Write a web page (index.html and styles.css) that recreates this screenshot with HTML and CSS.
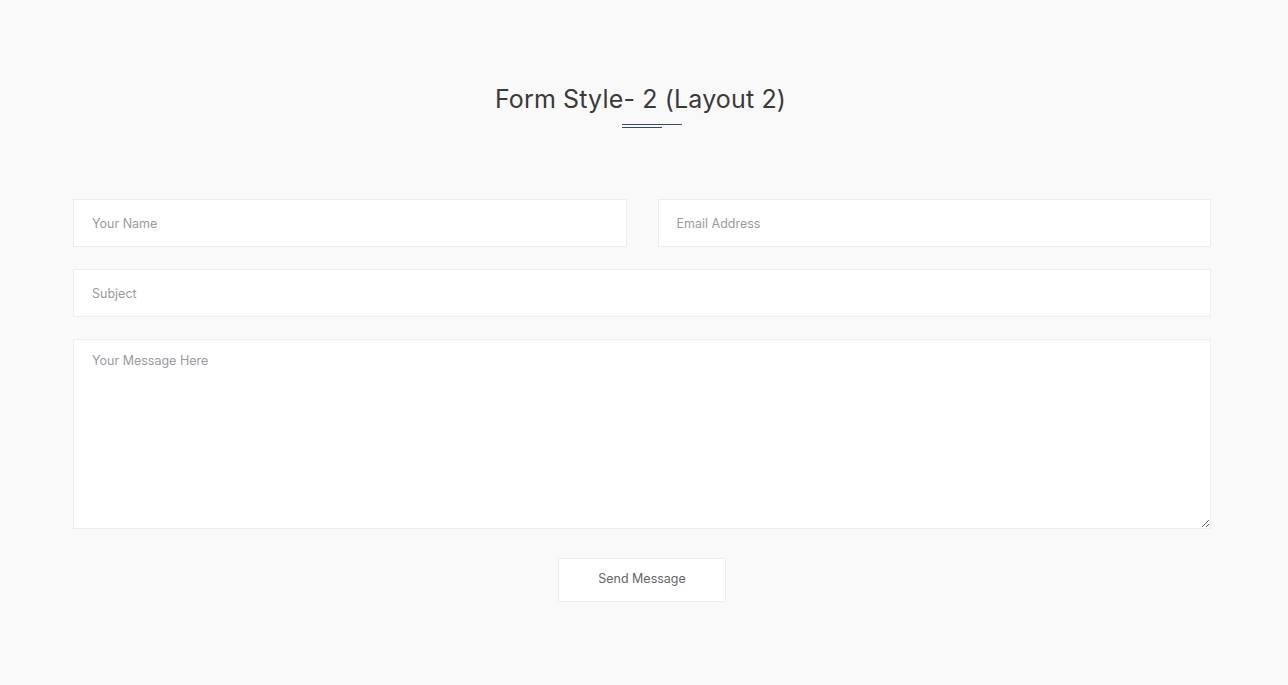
FILE: index.html
```html
<!DOCTYPE html>
<html>
<head>
<meta charset="utf-8">
<link rel="stylesheet" href="styles.css">
</head>
<body>
<section class="page">
  <div class="heading">
    <h2 class="title">Form Style- 2 (Layout 2)</h2>
    <div class="rule"><span class="rule-long"></span><span class="rule-short"></span></div>
  </div>
  <form class="form">
    <div class="row two">
      <input class="field" type="text" placeholder="Your Name">
      <input class="field" type="email" placeholder="Email Address">
    </div>
    <div class="row">
      <input class="field" type="text" placeholder="Subject">
    </div>
    <div class="row">
      <textarea class="field area" placeholder="Your Message Here"></textarea>
    </div>
    <div class="actions">
      <button class="btn" type="button">Send Message</button>
    </div>
  </form>
</section>
</body>
</html>
```
FILE: styles.css
```css
html, body {
  margin: 0;
  padding: 0;
  background: #f9f9f9;
  font-family: Inter, "Noto Sans", sans-serif;
}
.page {
  padding-top: 84px;
}
.heading {
  display: flex;
  flex-direction: column;
  align-items: center;
}
.title {
  margin: 0;
  padding-right: 7px;
  font-weight: 400;
  font-size: 25px;
  line-height: 30px;
  color: #3a3a3a;
  letter-spacing: 0.15px;
}
.rule {
  margin-top: 10px;
  margin-left: 16px;
  width: 60px;
  display: flex;
  flex-direction: column;
  gap: 2px;
}
.rule-long {
  display: block;
  width: 60px;
  height: 1px;
  background: #3b4a66;
}
.rule-short {
  display: block;
  width: 40px;
  height: 1px;
  background: #3b4a66;
}
.form {
  width: 1138px;
  margin: 71px 0 0 73px;
  display: flex;
  flex-direction: column;
  gap: 22px;
}
.row {
  display: flex;
}
.row.two {
  gap: 31px;
}
.field {
  flex: 1;
  box-sizing: border-box;
  height: 48px;
  border: 1px solid #ededed;
  background: #fff;
  padding: 0 18px;
  font-family: Inter, "Noto Sans", sans-serif;
  font-size: 12.5px;
  color: #555;
  outline: none;
}
.field::placeholder {
  color: #9a9a9e;
}
.area {
  height: 190px;
  padding-top: 13px;
  resize: vertical;
}
.actions {
  display: flex;
  justify-content: center;
  margin-top: 7px;
}
.btn {
  width: 168px;
  height: 44px;
  padding: 0 0 3px;
  background: #fff;
  border: 1px solid #ededed;
  font-family: Inter, "Noto Sans", sans-serif;
  font-size: 12.5px;
  color: #666;
  cursor: pointer;
}
```
